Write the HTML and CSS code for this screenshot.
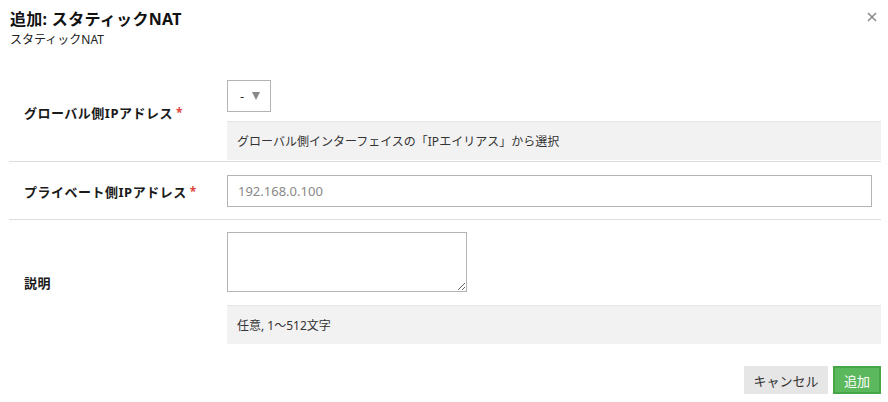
FILE: index.html
```html
<!DOCTYPE html>
<html lang="ja">
<head>
<meta charset="utf-8">
<title>追加: スタティックNAT</title>
<link rel="stylesheet" href="styles.css">
</head>
<body>
<div class="dialog">
  <div class="header">
    <h1 class="title">追加: スタティックNAT</h1>
    <div class="subtitle">スタティックNAT</div>
    <span class="close">
      <svg width="10" height="10" viewBox="0 0 10 10"><path d="M1 1 L9 9 M9 1 L1 9" stroke="#888" stroke-width="1.5" fill="none"/></svg>
    </span>
  </div>
  <div class="row row1">
    <div class="label">グローバル側IPアドレス<span class="req">*</span></div>
    <div class="field">
      <div class="select"><span class="dash">-</span><span class="caret"></span></div>
      <div class="help">グローバル側インターフェイスの「IPエイリアス」から選択</div>
    </div>
  </div>
  <div class="row row2">
    <div class="label">プライベート側IPアドレス<span class="req">*</span></div>
    <div class="field">
      <input class="text" type="text" placeholder="192.168.0.100">
    </div>
  </div>
  <div class="row row3">
    <div class="label">説明</div>
    <div class="field">
      <textarea class="area"></textarea>
      <div class="help help3">任意, 1～512文字</div>
    </div>
  </div>
  <div class="footer">
    <button class="btn cancel">キャンセル</button>
    <button class="btn ok">追加</button>
  </div>
</div>
</body>
</html>
```
FILE: styles.css
```css
* { box-sizing: border-box; }
body {
  margin: 0;
  background: #fff;
  font-family: "Noto Sans", "Noto Sans CJK JP", sans-serif;
  color: #222;
}
.dialog {
  width: 888px;
  padding: 0 7px 0 9px;
}
.header {
  position: relative;
  height: 68px;
  padding-top: 8px;
  padding-left: 1px;
}
.title {
  margin: 0;
  font-size: 16px;
  line-height: 22px;
  font-weight: bold;
  color: #111;
  letter-spacing: 0.3px;
}
.subtitle {
  font-size: 12px;
  line-height: 16px;
  margin-top: 2px;
  color: #222;
}
.close {
  position: absolute;
  right: 4px;
  top: 12px;
  width: 10px;
  height: 10px;
  display: block;
}
.close svg { display: block; }
.row {
  display: grid;
  grid-template-columns: 218px 1fr;
  align-items: center;
  border-bottom: 1px solid #dddddd;
  padding: 12px 0 1px;
}
.row2 { padding: 13px 0 12px; }
.row3 { border-bottom: none; padding: 12px 0 0; }
.label {
  padding-left: 15px;
  font-size: 13px;
  font-weight: bold;
  color: #1a1a1a;
  letter-spacing: 0.5px;
}
.row1 .label { margin-bottom: 16px; }
.row3 .label { margin-bottom: 12px; }
.req {
  color: #e0443a;
  font-size: 12px;
  margin-left: 3px;
  position: relative;
  top: -1px;
}
.field {
  display: flex;
  flex-direction: column;
  align-items: flex-start;
}
.select {
  width: 44px;
  height: 32px;
  border: 1px solid #b3b3b3;
  display: flex;
  align-items: center;
  padding-left: 12px;
  gap: 8px;
  font-size: 13px;
  color: #333;
}
.caret {
  width: 0;
  height: 0;
  border-left: 4.5px solid transparent;
  border-right: 4.5px solid transparent;
  border-top: 8px solid #888;
}
.help {
  align-self: stretch;
  margin-top: 9px;
  height: 39px;
  background: #f2f2f2;
  border-top: 1px solid #e6e6e6;
  padding-left: 10px;
  display: flex;
  align-items: center;
  font-size: 12px;
  color: #333;
}
.help3 { margin-top: 13px; }
.text {
  width: 645px;
  height: 32px;
  border: 1px solid #b3b3b3;
  padding: 0 10px;
  font-family: "Noto Sans", "Noto Sans CJK JP", sans-serif;
  font-size: 13px;
  color: #333;
  outline: none;
}
.text::placeholder { color: #888; }
.area {
  width: 240px;
  height: 60px;
  border: 1px solid #b3b3b3;
  resize: both;
  display: block;
  margin: 0;
}
.footer {
  display: flex;
  justify-content: flex-end;
  gap: 5px;
  margin-top: 22px;
}
.btn {
  height: 28px;
  font-family: "Noto Sans", "Noto Sans CJK JP", sans-serif;
  font-size: 13px;
  border: none;
  padding: 0;
  margin: 0;
}
.cancel {
  width: 84px;
  background: #e6e6e6;
  color: #333;
}
.ok {
  width: 48px;
  background: #5cb85c;
  border: 2px solid #45a845;
  color: #fff;
}
```
